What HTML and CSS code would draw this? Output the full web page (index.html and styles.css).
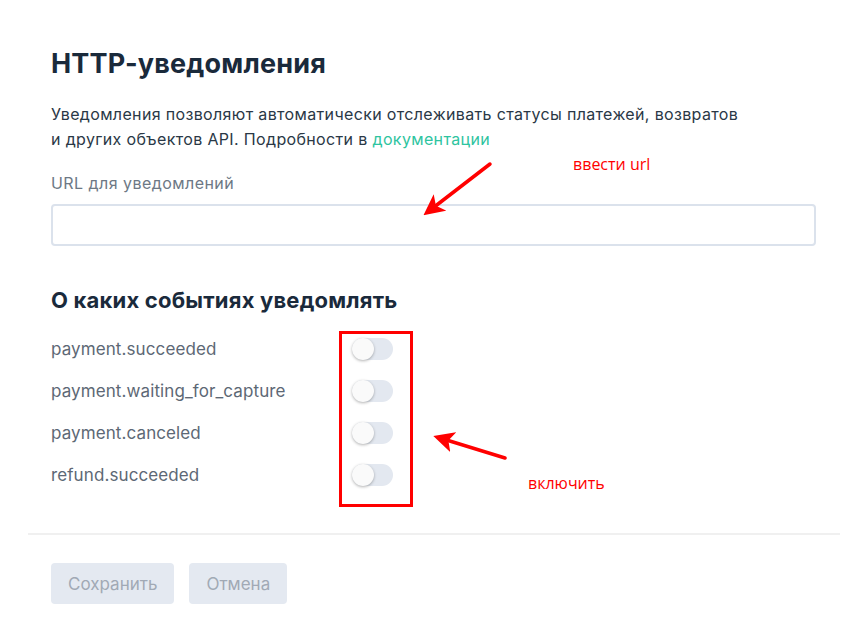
FILE: index.html
```html
<!DOCTYPE html>
<html lang="ru">

<head>
    <meta charset="UTF-8">
    <meta name="viewport" content="width=device-width, initial-scale=1.0">
    <title>HTTP-уведомления</title>
    <link rel="stylesheet" href="styles.css">
</head>

<body>
    <div class="card">
        <div class="card-body">
            <h1>HTTP-уведомления</h1>
            <p class="intro">
                Уведомления позволяют автоматически отслеживать статусы платежей, возвратов<br>
                и других объектов API. Подробности в <a href="#">документации</a>
            </p>

            <label class="field-label" for="url">URL для уведомлений</label>
            <input type="text" id="url" class="field">

            <h2>О каких событиях уведомлять</h2>
            <ul class="events">
                <li><span>payment.succeeded</span><label class="switch"><input type="checkbox"><i></i></label></li>
                <li><span>payment.waiting_for_capture</span><label class="switch"><input type="checkbox"><i></i></label></li>
                <li><span>payment.canceled</span><label class="switch"><input type="checkbox"><i></i></label></li>
                <li><span>refund.succeeded</span><label class="switch"><input type="checkbox"><i></i></label></li>
            </ul>
        </div>

        <div class="card-footer">
            <button class="btn" disabled>Сохранить</button>
            <button class="btn" disabled>Отмена</button>
        </div>
    </div>

    <!-- пометки поверх формы -->
    <div class="note-box"></div>
    <svg class="notes" width="862" height="639" viewBox="0 0 862 639">
        <defs>
            <marker id="head" markerWidth="6" markerHeight="6" refX="4" refY="3" orient="auto" markerUnits="strokeWidth">
                <path d="M0,0 L6,3 L0,6 L1.5,3 Z" fill="#ff0000"/>
            </marker>
        </defs>
        <line x1="490" y1="164" x2="429" y2="211" stroke="#ff0000" stroke-width="3.5" stroke-linecap="round" marker-end="url(#head)"/>
        <line x1="505" y1="458" x2="440" y2="438" stroke="#ff0000" stroke-width="3.5" stroke-linecap="round" marker-end="url(#head)"/>
    </svg>
    <span class="note note-url">ввести url</span>
    <span class="note note-on">включить</span>
</body>

</html>
```

FILE: styles.css
```css
body {
    margin: 0;
    background: #fff;
    font-family: Inter, "Noto Sans", sans-serif;
    color: #1d2b3a;
}

.card {
    margin-left: 28px;
    width: 812px;
}

.card-body {
    padding: 46px 24px 37px 23px;
    border-bottom: 2px solid #f0f0f0;
}

h1 {
    margin: 0;
    font-size: 27px;
    line-height: 36px;
    letter-spacing: 0.2px;
    font-weight: 700;
    color: #1a2a3b;
}

.intro {
    margin: 20px 0 0;
    font-size: 16px;
    line-height: 25px;
    letter-spacing: 0.35px;
    color: #2a3846;
}

.intro a {
    color: #2ec4a0;
    text-decoration: none;
}

.field-label {
    display: block;
    margin-top: 19px;
    font-size: 16px;
    line-height: 24px;
    letter-spacing: 0.45px;
    color: #6d7885;
}

.field {
    display: block;
    box-sizing: border-box;
    width: 100%;
    height: 42px;
    margin-top: 9px;
    border: 2px solid #dbe2ec;
    border-radius: 4px;
    outline: none;
}

h2 {
    margin: 40px 0 0;
    font-size: 22px;
    line-height: 28px;
    letter-spacing: 0.2px;
    font-weight: 700;
    color: #1a2a3b;
}

.events {
    list-style: none;
    margin: 14px 0 0;
    padding: 0;
}

.events li {
    display: grid;
    grid-template-columns: 301px auto;
    align-items: center;
    height: 42px;
    font-size: 17px;
    letter-spacing: 0.1px;
    color: #5d6875;
}

.switch {
    position: relative;
    display: block;
    width: 41px;
    height: 22px;
}

.switch input {
    display: none;
}

.switch i {
    display: block;
    height: 100%;
    border-radius: 11px;
    background: #e3e8f0;
}

.switch i::after {
    content: "";
    position: absolute;
    left: 0;
    top: 0;
    width: 22px;
    height: 22px;
    border-radius: 50%;
    background: #fafafa;
    box-shadow: 0 1px 3px rgba(0, 0, 0, 0.3);
}

.card-footer {
    display: flex;
    gap: 15px;
    padding: 28px 23px;
}

.btn {
    height: 41px;
    padding: 0 17px;
    border: none;
    border-radius: 4px;
    background: #e4e9f1;
    color: #a1a9b5;
    font-family: inherit;
    font-size: 17px;
}

/* пометки */
.notes {
    position: absolute;
    left: 0;
    top: 0;
    pointer-events: none;
}

.note-box {
    position: absolute;
    left: 339px;
    top: 331px;
    width: 68px;
    height: 170px;
    border: 3px solid #ff0000;
}

.note {
    position: absolute;
    font-family: "Open Sans", sans-serif;
    font-size: 16px;
    color: #ff0000;
}

.note-url {
    left: 573px;
    top: 153px;
}

.note-on {
    left: 528px;
    top: 472px;
}
```
